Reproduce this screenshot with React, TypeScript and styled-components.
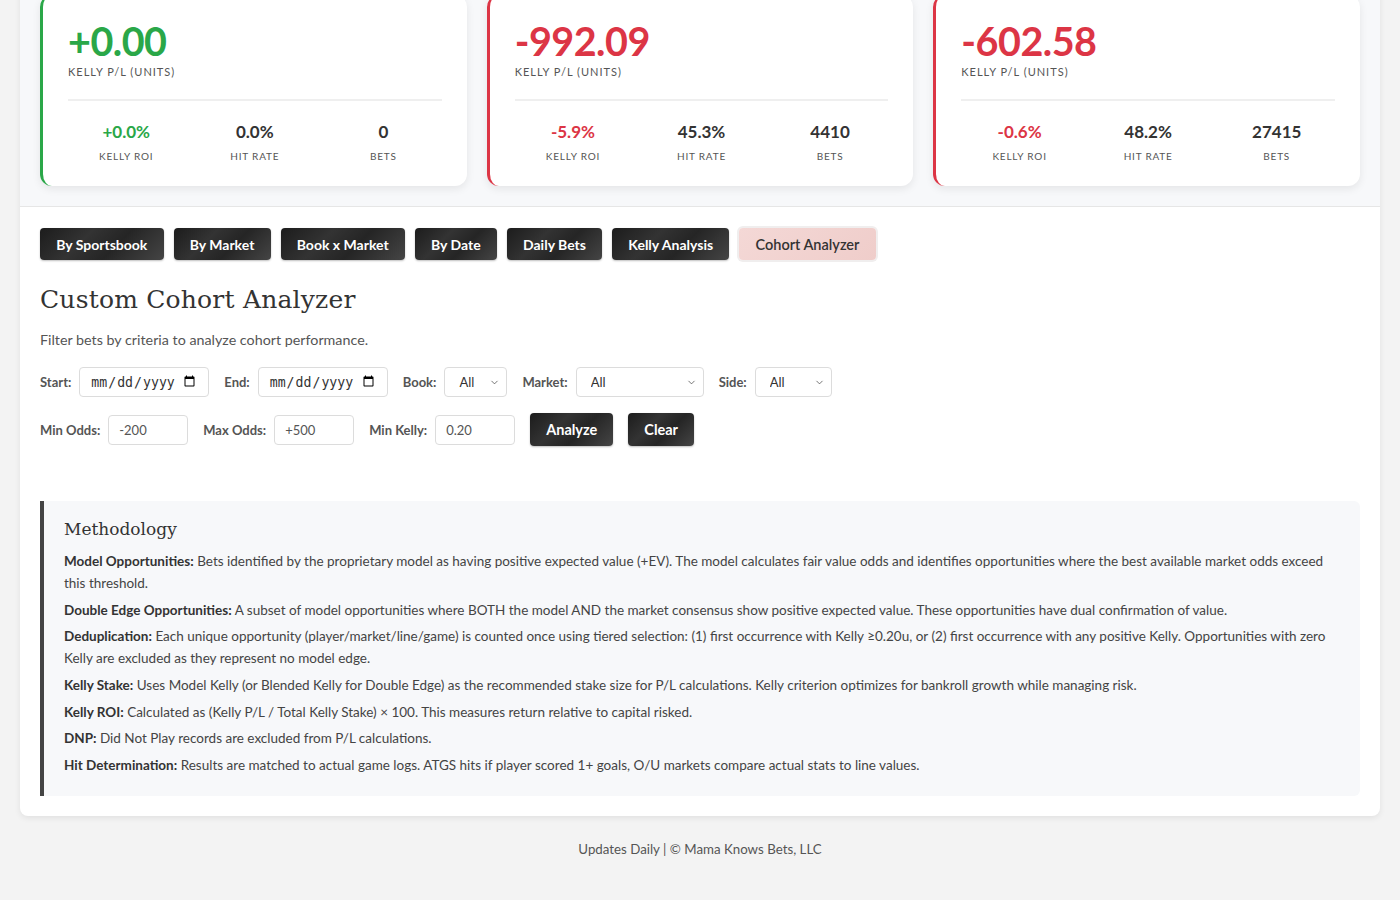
import React from 'react';
import styled, { createGlobalStyle } from 'styled-components';
import { ChevronDown } from 'lucide-react';

const green = '#2aa748';
const red = '#dc3545';
const ink = '#333';
const muted = '#555';

const GlobalStyle = createGlobalStyle`
  html, body {
    margin: 0;
    padding: 0;
    background: #f3f3f3;
    font-family: Lato, "Open Sans", "Liberation Sans", sans-serif;
    color: ${ink};
  }
  * { box-sizing: border-box; }
`;

type Tone = 'up' | 'down' | 'flat';

const toneColor = (tone: Tone) => {
  if (tone === 'up') return green;
  if (tone === 'down') return red;
  return ink;
};

const summaries = [
  { pl: '+0.00', roi: '+0.0%', hit: '0.0%', bets: '0', tone: 'up' as Tone },
  { pl: '-992.09', roi: '-5.9%', hit: '45.3%', bets: '4410', tone: 'down' as Tone },
  { pl: '-602.58', roi: '-0.6%', hit: '48.2%', bets: '27415', tone: 'down' as Tone },
];

const tabs = ['By Sportsbook', 'By Market', 'Book x Market', 'By Date', 'Daily Bets', 'Kelly Analysis', 'Cohort Analyzer'];

const methodology = [
  ['Model Opportunities:', 'Bets identified by the proprietary model as having positive expected value (+EV). The model calculates fair value odds and identifies opportunities where the best available market odds exceed this threshold.'],
  ['Double Edge Opportunities:', 'A subset of model opportunities where BOTH the model AND the market consensus show positive expected value. These opportunities have dual confirmation of value.'],
  ['Deduplication:', 'Each unique opportunity (player/market/line/game) is counted once using tiered selection: (1) first occurrence with Kelly \u22650.20u, or (2) first occurrence with any positive Kelly. Opportunities with zero Kelly are excluded as they represent no model edge.'],
  ['Kelly Stake:', 'Uses Model Kelly (or Blended Kelly for Double Edge) as the recommended stake size for P/L calculations. Kelly criterion optimizes for bankroll growth while managing risk.'],
  ['Kelly ROI:', 'Calculated as (Kelly P/L / Total Kelly Stake) \u00d7 100. This measures return relative to capital risked.'],
  ['DNP:', 'Did Not Play records are excluded from P/L calculations.'],
  ['Hit Determination:', 'Results are matched to actual game logs. ATGS hits if player scored 1+ goals, O/U markets compare actual stats to line values.'],
];

const Page = styled.div`
  padding: 0 20px;
  margin-top: -25px;
`;

const Panel = styled.main`
  background: #fff;
  border-radius: 0 0 8px 8px;
  box-shadow: 0 2px 6px rgba(0, 0, 0, 0.08);
  overflow: hidden;
`;

const StatsSection = styled.section`
  display: grid;
  grid-template-columns: repeat(3, 1fr);
  gap: 20px;
  padding: 20px;
  background: #f7f8fa;
  border-bottom: 1px solid #e6e6e6;
`;

const Card = styled.div<{ $tone: Tone }>`
  background: #fff;
  border-left: 3px solid ${({ $tone }) => toneColor($tone)};
  border-radius: 12px;
  box-shadow: 0 3px 8px rgba(0, 0, 0, 0.08);
  padding: 24px 25px 24px 25px;
`;

const BigNumber = styled.div<{ $tone: Tone }>`
  font-size: 39.5px;
  line-height: 44px;
  font-weight: 700;
  letter-spacing: -0.5px;
  color: ${({ $tone }) => toneColor($tone)};
`;

const CardLabel = styled.div`
  margin-top: 2px;
  font-size: 11px;
  line-height: 14px;
  letter-spacing: 1px;
  text-transform: uppercase;
  color: ${muted};
`;

const Divider = styled.hr`
  border: 0;
  border-top: 2px solid #efefef;
  margin: 20px 0 0;
`;

const StatRow = styled.div`
  display: grid;
  grid-template-columns: repeat(3, 1fr);
  column-gap: 12px;
  padding-top: 21px;
  text-align: center;
`;

const StatValue = styled.div<{ $tone: Tone }>`
  font-size: 17px;
  line-height: 20px;
  font-weight: 700;
  color: ${({ $tone }) => toneColor($tone)};
`;

const StatLabel = styled.div`
  margin-top: 8px;
  font-size: 10px;
  line-height: 12px;
  letter-spacing: 0.8px;
  text-transform: uppercase;
  color: ${muted};
`;

const Body = styled.section`
  padding: 21px 20px 20px;
`;

const TabBar = styled.nav`
  display: flex;
  gap: 10px;
`;

const darkButton = `
  background: linear-gradient(135deg, #1c1c1c 0%, #333 35%, #252525 60%, #454545 100%);
  color: #fff;
  font-weight: 700;
  border: 0;
  border-radius: 4px;
  box-shadow: 0 1px 2px rgba(0, 0, 0, 0.25);
  font-family: Lato, "Open Sans", "Liberation Sans", sans-serif;
`;

const Tab = styled.button<{ $active?: boolean }>`
  ${darkButton}
  height: 32px;
  padding: 0 16.2px;
  font-size: 14px;
  ${({ $active }) => $active && `
    background: linear-gradient(135deg, #f4d8d6, #efcdca);
    color: #333;
    font-weight: 600;
    font-size: 14.5px;
    box-shadow: 0 0 0 2px #f0eeee;
  `}
`;

const Title = styled.h2`
  margin: 23px 0 0;
  font-family: "DejaVu Serif", "Liberation Serif", serif;
  font-weight: 400;
  font-size: 25px;
  line-height: 34px;
  letter-spacing: 0.2px;
  color: #333;
`;

const Lead = styled.p`
  margin: 13px 0 0;
  font-size: 14.3px;
  line-height: 20px;
  color: ${muted};
`;

const FilterRow = styled.div<{ $top: number }>`
  display: flex;
  align-items: center;
  margin-top: ${({ $top }) => $top}px;
`;

const Label = styled.label`
  font-size: 13px;
  font-weight: 700;
  color: ${muted};
  margin-right: 8px;
`;

const Field = styled.input<{ $w: number }>`
  width: ${({ $w }) => $w}px;
  height: 30px;
  border: 1px solid #dcdcdc;
  border-radius: 4px;
  padding: 0 10px;
  font-size: 13px;
  color: ${muted};
  font-family: Lato, "Liberation Sans", sans-serif;
  background: #fff;
  margin-right: 15px;
  &[type='date'] {
    font-family: "DejaVu Sans Mono", "Liberation Mono", monospace;
    font-size: 13.2px;
    color: #333;
  }
`;

const SelectWrap = styled.div<{ $w: number }>`
  position: relative;
  width: ${({ $w }) => $w}px;
  margin-right: 15px;
  svg {
    position: absolute;
    right: 7px;
    top: 10px;
    color: #444;
    pointer-events: none;
  }
`;

const Select = styled.select`
  appearance: none;
  width: 100%;
  height: 30px;
  border: 1px solid #dcdcdc;
  border-radius: 4px;
  padding: 0 20px 0 14px;
  font-size: 13px;
  color: #333;
  font-family: Lato, "Liberation Sans", sans-serif;
  background: #fff;
`;

const Dropdown: React.FC<{ w: number }> = ({ w }) => (
  <SelectWrap $w={w}>
    <Select defaultValue="all">
      <option value="all">All</option>
    </Select>
    <ChevronDown size={11} strokeWidth={1.6} />
  </SelectWrap>
);

const ActionButton = styled.button`
  ${darkButton}
  height: 33px;
  padding: 0 16px;
  font-size: 14.5px;
  margin-right: 15px;
`;

const Methodology = styled.aside`
  margin-top: 55px;
  background: #f7f8fa;
  border-left: 4px solid #444;
  border-radius: 0 6px 6px 0;
  padding: 16px 24px 20px 20px;
`;

const MethodTitle = styled.h3`
  margin: 0 0 9px;
  font-family: "DejaVu Serif", "Liberation Serif", serif;
  font-weight: 400;
  font-size: 17px;
  line-height: 24px;
  color: #333;
`;

const MethodText = styled.p`
  margin: 0 0 4.7px;
  font-size: 13.5px;
  line-height: 22px;
  color: #444;
  &:last-child { margin-bottom: 0; }
  strong { color: #333; }
`;

const Footer = styled.footer`
  padding: 25px 0 40px;
  text-align: center;
  font-size: 13.3px;
  line-height: 16px;
  color: ${muted};
`;

const App: React.FC = () => (
  <>
    <GlobalStyle />
    <Page>
      <Panel>
        <StatsSection>
          {summaries.map((s) => (
            <Card key={s.pl} $tone={s.tone}>
              <BigNumber $tone={s.tone}>{s.pl}</BigNumber>
              <CardLabel>Kelly P/L (Units)</CardLabel>
              <Divider />
              <StatRow>
                <div>
                  <StatValue $tone={s.tone}>{s.roi}</StatValue>
                  <StatLabel>Kelly ROI</StatLabel>
                </div>
                <div>
                  <StatValue $tone="flat">{s.hit}</StatValue>
                  <StatLabel>Hit Rate</StatLabel>
                </div>
                <div>
                  <StatValue $tone="flat">{s.bets}</StatValue>
                  <StatLabel>Bets</StatLabel>
                </div>
              </StatRow>
            </Card>
          ))}
        </StatsSection>

        <Body>
          <TabBar>
            {tabs.map((t) => (
              <Tab key={t} $active={t === 'Cohort Analyzer'}>{t}</Tab>
            ))}
          </TabBar>

          <Title>Custom Cohort Analyzer</Title>
          <Lead>Filter bets by criteria to analyze cohort performance.</Lead>

          <FilterRow $top={17}>
            <Label>Start:</Label>
            <Field type="date" $w={130} />
            <Label>End:</Label>
            <Field type="date" $w={130} />
            <Label>Book:</Label>
            <Dropdown w={63} />
            <Label>Market:</Label>
            <Dropdown w={128} />
            <Label>Side:</Label>
            <Dropdown w={77} />
          </FilterRow>

          <FilterRow $top={16}>
            <Label>Min Odds:</Label>
            <Field $w={80} defaultValue="-200" />
            <Label>Max Odds:</Label>
            <Field $w={80} defaultValue="+500" />
            <Label>Min Kelly:</Label>
            <Field $w={80} defaultValue="0.20" />
            <ActionButton>Analyze</ActionButton>
            <ActionButton>Clear</ActionButton>
          </FilterRow>

          <Methodology>
            <MethodTitle>Methodology</MethodTitle>
            {methodology.map(([term, text]) => (
              <MethodText key={term}>
                <strong>{term}</strong> {text}
              </MethodText>
            ))}
          </Methodology>
        </Body>
      </Panel>
      <Footer>Updates Daily | © Mama Knows Bets, LLC</Footer>
    </Page>
  </>
);

export default App;
